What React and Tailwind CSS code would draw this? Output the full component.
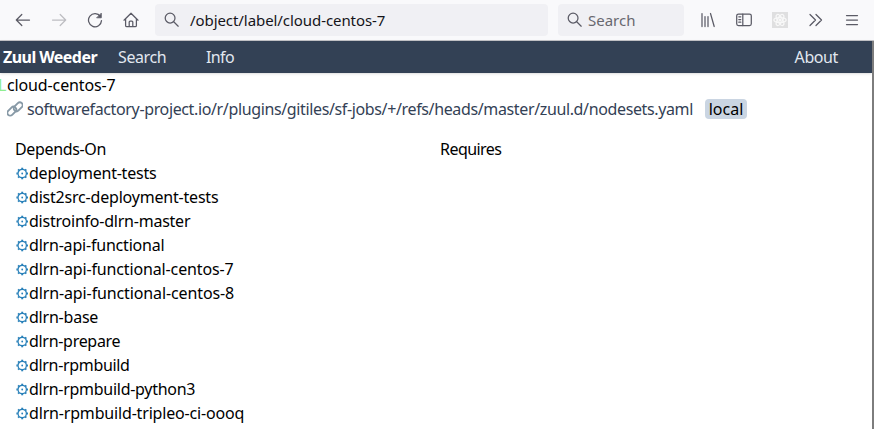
import React from 'react';

const jobs = [
  ['deployment-tests', 'tracking-[-0.23px]'],
  ['dist2src-deployment-tests', 'tracking-[-0.2px]'],
  ['distroinfo-dlrn-master', 'tracking-[-0.23px]'],
  ['dlrn-api-functional', 'tracking-[-0.2px]'],
  ['dlrn-api-functional-centos-7', 'tracking-[-0.14px]'],
  ['dlrn-api-functional-centos-8', 'tracking-[-0.12px]'],
  ['dlrn-base', 'tracking-[-0.22px]'],
  ['dlrn-prepare', 'tracking-[-0.3px]'],
  ['dlrn-rpmbuild', 'tracking-[-0.33px]'],
  ['dlrn-rpmbuild-python3', 'tracking-[-0.28px]'],
  ['dlrn-rpmbuild-tripleo-ci-oooq', 'tracking-[-0.17px]'],
];

function Icon({ className, children }) {
  return (
    <svg className={`shrink-0 ${className}`} width="16" height="16" viewBox="0 0 16 16" fill="none" stroke="currentColor" strokeWidth="1.25" strokeLinecap="round" strokeLinejoin="round">
      {children}
    </svg>
  );
}

const Glass = ({ className }) => (
  <Icon className={className}>
    <circle cx="6.1" cy="6.1" r="4.9" />
    <path d="M9.700 9.700L14.200 14.200" />
  </Icon>
);

function Gear() {
  return (
    <svg className="h-3.5 w-3.5 shrink-0 text-[#2980b9]" viewBox="0 0 14 14" fill="none" stroke="currentColor">
      <circle cx="7.200" cy="7.500" r="4.200" strokeWidth="1.300" />
      <circle cx="7.200" cy="7.500" r="0.900" fill="currentColor" stroke="none" />
      {[0, 45, 90, 135, 180, 225, 270, 315].map((a) => (
        <path key={a} d="M7.200 1.700V3.100" strokeWidth="1.900" transform={`rotate(${a} 7.200 7.500)`} />
      ))}
    </svg>
  );
}

function Toolbar() {
  return (
    <div className="flex h-[41px] shrink-0 items-center border-b border-[#c4c4c8] bg-[#f9f9fb] text-[15px] text-[#5b5b66]">
      <Icon className="ml-[15px]"><path d="M14.500 8H1.300M6.800 2.500L1.300 8l5.500 5.500" /></Icon>
      <Icon className="ml-5 text-[#bdbdc2]"><path d="M1.500 8h13.200M9.200 2.500L14.700 8l-5.500 5.500" /></Icon>
      <Icon className="ml-5"><path d="M13.400 4.600A6.500 6.500 0 1 0 14.500 8.600" /><path d="M14.300 1.500v4.300H10z" fill="currentColor" strokeWidth="0.800" /></Icon>
      <Icon className="ml-5"><path d="M1 8.200L8 1.200l7 7M2.600 7v6.400a1.300 1.300 0 0 0 1.300 1.300h8.200a1.300 1.300 0 0 0 1.300-1.300V7M6.200 14.500V10a1 1 0 0 1 1-1h1.600a1 1 0 0 1 1 1v4.500" /></Icon>
      <div className="ml-4 flex h-8 w-[393px] shrink-0 items-center rounded bg-[#f0f0f4]">
        <Glass className="ml-[9px]" />
        <span className="ml-2.5 tracking-[-0.07px] text-[#15141a]">/object/label/cloud-centos-7</span>
      </div>
      <div className="ml-2.5 flex h-8 w-[126px] shrink-0 items-center rounded bg-[#f0f0f4]">
        <Glass className="ml-[9px]" />
        <span className="ml-[5px] text-[#68686f]">Search</span>
      </div>
      <Icon className="ml-[17px]"><path d="M1 1.500v13M4 4.500v10M7 4.500v10M9.500 1.500l3.700 13" /></Icon>
      <Icon className="ml-[19px]"><rect x="0.700" y="2" width="14.600" height="11.500" rx="1.800" /><path d="M6.800 2v11.500M2.800 4.800h2M2.800 7.500h2M2.800 10.200h2" /></Icon>
      <div className="ml-5 flex h-4 w-4 shrink-0 items-center justify-center bg-[#dfdfe0] text-[#f8f8f8]">
        <svg className="h-3.5 w-3.5" viewBox="0 0 16 16" fill="none" stroke="currentColor" strokeWidth="1.500">
          <ellipse cx="8" cy="8" rx="7" ry="2.800" />
          <ellipse cx="8" cy="8" rx="7" ry="2.800" transform="rotate(60 8 8)" />
          <ellipse cx="8" cy="8" rx="7" ry="2.800" transform="rotate(120 8 8)" />
          <circle cx="8" cy="8" r="1" fill="currentColor" />
        </svg>
      </div>
      <Icon className="ml-5"><path d="M2 2.500L7.500 8 2 13.500M8 2.500L13.500 8 8 13.500" /></Icon>
      <Icon className="ml-5"><path d="M2.500 3.500h11M2.500 8h11M2.500 12.500h11" /></Icon>
    </div>
  );
}

export default function App() {
  return (
    <div className="flex h-[429px] w-[874px] flex-col overflow-hidden bg-white font-['Noto_Sans',sans-serif] text-base whitespace-nowrap text-black">
      <Toolbar />
      <div className="flex min-h-0 flex-1">
        <main className="w-[872px] shrink-0">
          <nav className="flex h-8 items-center bg-[#334155] pl-[3px] text-slate-200 shadow-sm">
            <span className="w-[115px] shrink-0 font-bold tracking-[-0.55px] text-white">Zuul Weeder</span>
            <span className="w-[88px] shrink-0 tracking-[-0.4px]">Search</span>
            <span className="tracking-[-0.6px]">Info</span>
            <span className="mr-[34px] ml-auto tracking-[-0.4px]">About</span>
          </nav>
          <div className="flex h-6 items-center">
            <span className="-ml-[2px] w-[9px] shrink-0 text-[#90ee90]">L</span>
            <span className="tracking-[-0.13px]">cloud-centos-7</span>
          </div>
          <div className="flex h-6 items-center">
            <svg className="ml-[7px] h-4 w-4 shrink-0 text-[#8799a6]" viewBox="0 0 16 16" fill="none" stroke="currentColor" strokeWidth="1.900">
              <rect x="-0.300" y="7.400" width="10.200" height="5.600" rx="2.800" transform="rotate(-45 4.800 10.200)" />
              <rect x="6.100" y="3" width="10.200" height="5.600" rx="2.800" transform="rotate(-45 11.200 5.800)" />
            </svg>
            <span className="ml-1 w-[678px] shrink-0 tracking-[-0.366px] text-[#334155]">softwarefactory-project.io/r/plugins/gitiles/sf-jobs/+/refs/heads/master/zuul.d/nodesets.yaml</span>
            <span className="flex h-5 w-[42px] items-center justify-center rounded bg-slate-300">local</span>
          </div>
          <div className="mt-4 grid grid-cols-[425px_1fr] pl-[15px]">
            <section>
              <h2 className="h-6 tracking-[-0.35px]">Depends-On</h2>
              <ul>
                {jobs.map(([name, tracking]) => (
                  <li key={name} className="flex h-6 items-center">
                    <Gear /><span className={tracking}>{name}</span>
                  </li>
                ))}
              </ul>
            </section>
            <section><h2 className="h-6 tracking-[-0.55px]">Requires</h2></section>
          </div>
        </main>
        <div className="w-0.5 shrink-0 bg-[#7d7d7d]" />
      </div>
    </div>
  );
}
